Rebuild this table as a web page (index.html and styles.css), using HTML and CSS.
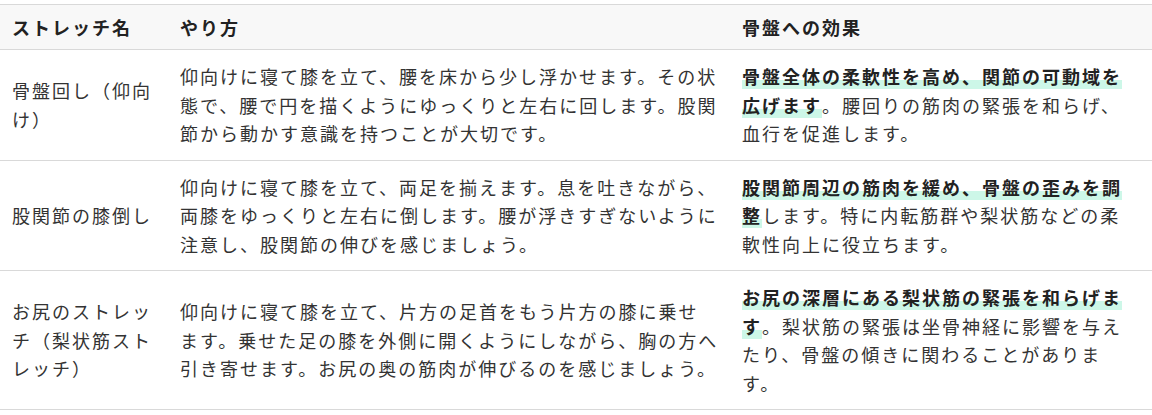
FILE: index.html
```html
<!DOCTYPE html>
<html lang="ja">
<head>
<meta charset="utf-8">
<link rel="stylesheet" href="styles.css">
</head>
<body>
<table class="stretch-table">
  <colgroup>
    <col class="col-name">
    <col class="col-how">
    <col class="col-effect">
  </colgroup>
  <thead>
    <tr>
      <th>ストレッチ名</th>
      <th class="how">やり方</th>
      <th class="effect">骨盤への効果</th>
    </tr>
  </thead>
  <tbody>
    <tr>
      <td class="name">骨盤回し（仰向け）</td>
      <td class="how">仰向けに寝て膝を立て、腰を床から少し浮かせます。その状態で、腰で円を描くようにゆっくりと左右に回します。股関節から動かす意識を持つことが大切です。</td>
      <td class="effect"><strong class="marker">骨盤全体の柔軟性を高め、関節の可動域を広げます</strong>。腰回りの筋肉の緊張を和らげ、血行を促進します。</td>
    </tr>
    <tr>
      <td class="name">股関節の膝倒し</td>
      <td class="how">仰向けに寝て膝を立て、両足を揃えます。息を吐きながら、両膝をゆっくりと左右に倒します。腰が浮きすぎないように注意し、股関節の伸びを感じましょう。</td>
      <td class="effect"><strong class="marker">股関節周辺の筋肉を緩め、骨盤の歪みを調整</strong>します。特に内転筋群や梨状筋などの柔軟性向上に役立ちます。</td>
    </tr>
    <tr>
      <td class="name">お尻のストレッチ（梨状筋ストレッチ）</td>
      <td class="how">仰向けに寝て膝を立て、片方の足首をもう片方の膝に乗せ<span class="nowrap">ます。</span>乗せた足の膝を外側に開くようにしながら、胸の方へ引き寄せます。お尻の奥の筋肉が伸びるのを感じましょう。</td>
      <td class="effect"><strong class="marker">お尻の深層にある梨状筋の緊張を和らげます</strong>。梨状筋の緊張は坐骨神経に影響を与えたり、骨盤の傾きに関わることがありま<span class="nowrap">す。</span></td>
    </tr>
  </tbody>
</table>
</body>
</html>
```

FILE: styles.css
```css
html, body {
  margin: 0;
  padding: 0;
  background: #ffffff;
}

body {
  padding-top: 4px;
  font-family: "Noto Sans CJK JP", "Noto Sans", sans-serif;
  font-size: 18px;
  color: #333333;
}

.stretch-table {
  width: 100%;
  border-collapse: collapse;
  table-layout: fixed;
  letter-spacing: 2px;
  text-spacing-trim: space-all;
}

.col-name { width: 168px; }
.col-how { width: 562px; }

.stretch-table th {
  background: #f8f8f8;
  color: #222222;
  font-weight: 700;
  text-align: left;
  padding: 8px 12px;
  line-height: 28px;
  border-top: 1px solid #d9d9d9;
  border-bottom: 1px solid #d9d9d9;
}

.stretch-table td {
  padding: 12px;
  line-height: 28.5px;
  vertical-align: middle;
  border-bottom: 1px solid #d9d9d9;
}

.stretch-table .how {
  padding-right: 10px;
}

.stretch-table .effect {
  padding-right: 16px;
}

.nowrap {
  white-space: nowrap;
}

.marker {
  font-weight: 700;
  color: #222222;
  background: linear-gradient(transparent 64%, #cdf7e8 64%);
}
```
